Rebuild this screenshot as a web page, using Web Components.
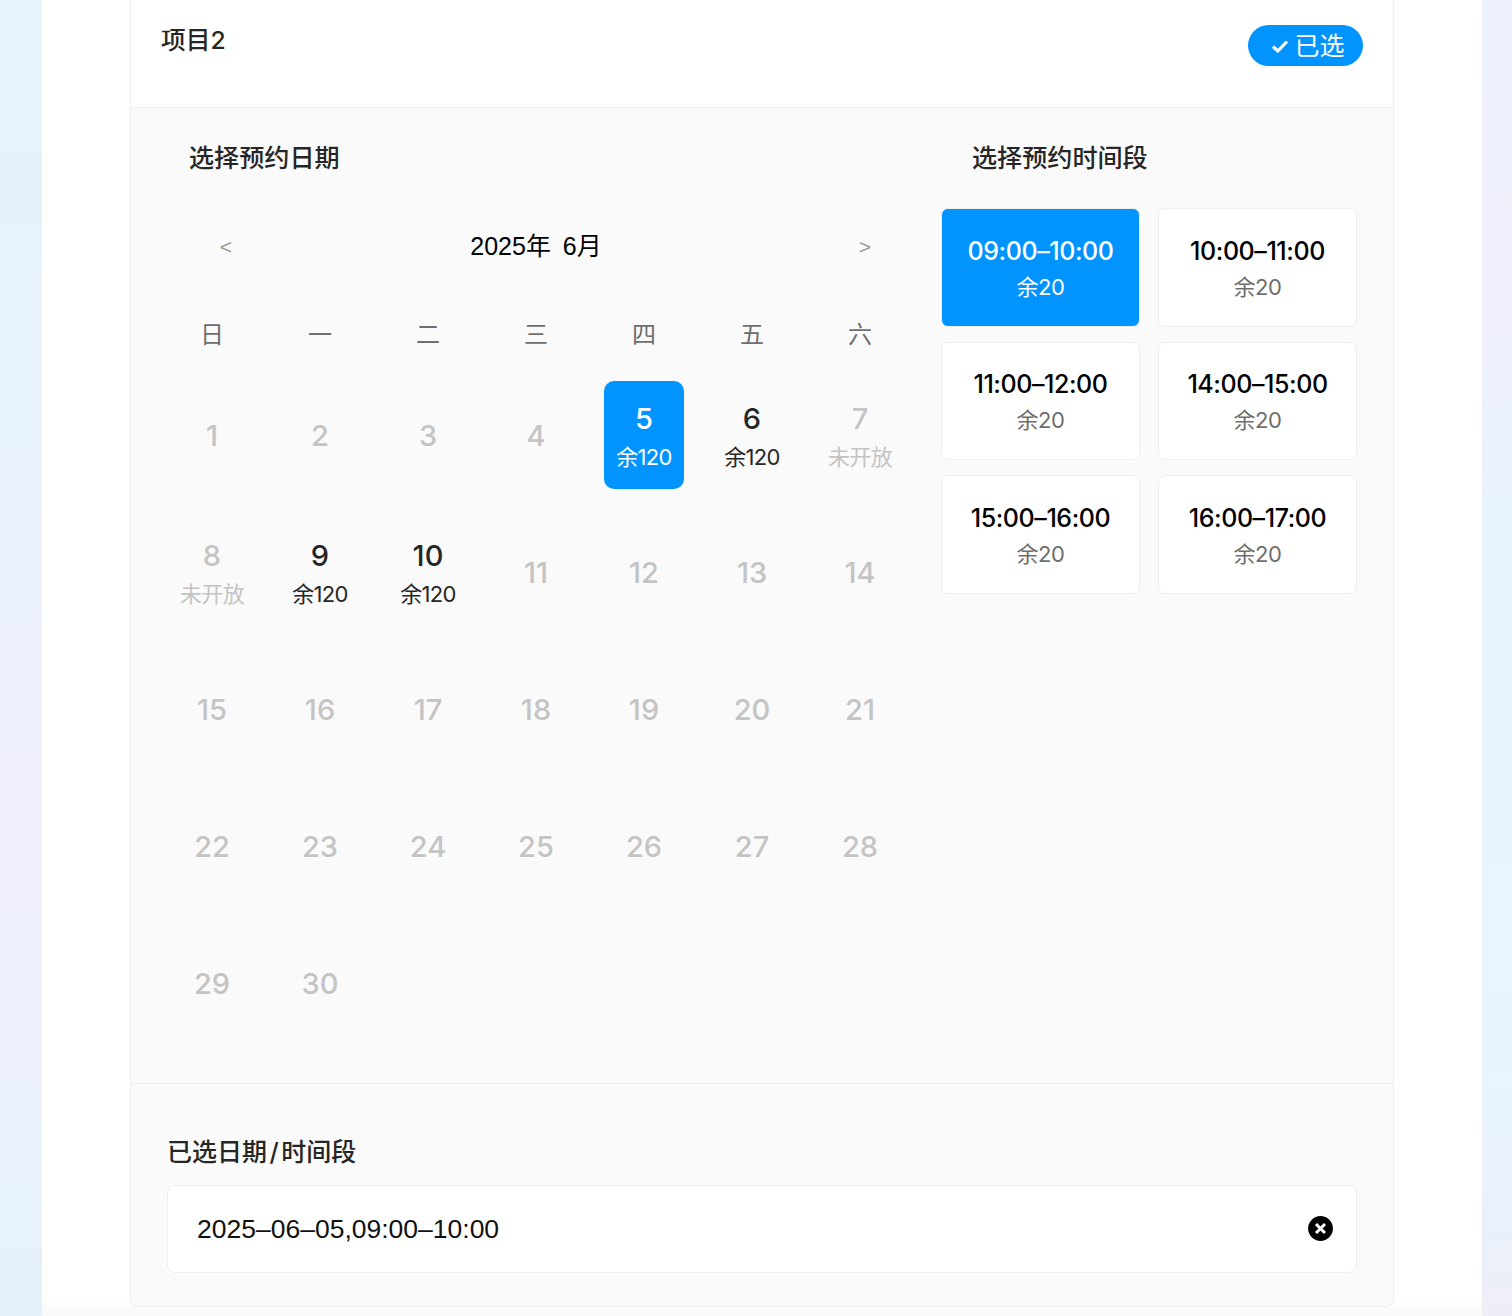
<!DOCTYPE html>
<html lang="zh">
<head>
<meta charset="utf-8">
<title>预约</title>
<style>
  html, body { margin: 0; height: 1316px; overflow: hidden; }
  body {
    font-family: Inter, "Noto Sans CJK SC", sans-serif;
    background:
      linear-gradient(180deg, #e6f3fd 0, #e5f2fc 200px, #e8f1fc 450px, #eaf0fc 600px, #efeffb 800px, #edf0fb 1000px, #e8f2fb 1200px, #e4f1fb 1316px) left top / 42px 100% no-repeat,
      linear-gradient(180deg, #eceffd 0, #efeffb 300px, #e9f3fc 500px, #e9f3fc 800px, #e8f4fd 1050px, #eaf0f9 1240px, #efeef6 1316px) right top / 30px 100% no-repeat,
      #fff;
  }
</style>
</head>
<body>
<booking-page>
  <project-card name="项目2">
    <booking-calendar slot="calendar"></booking-calendar>
    <slot-picker slot="slots"></slot-picker>
    <selected-field slot="footer" label="已选日期/时间段" value="2025–06–05,09:00–10:00"></selected-field>
  </project-card>
</booking-page>
<script>
  class BookingPage extends HTMLElement {
    constructor() {
      super();
      this.attachShadow({ mode: "open" });
      this.shadowRoot.innerHTML = `
        <style>
          :host { display: block; margin: 0 30px 0 42px; height: 1316px; padding: 0 88px;
            box-sizing: border-box; background: linear-gradient(180deg, #fff 0, #fff 1296px, #f8f8f9 1316px); }
        </style>
        <slot></slot>`;
    }
  }

  class ProjectCard extends HTMLElement {
    constructor() {
      super();
      this.attachShadow({ mode: "open" });
    }
    connectedCallback() {
      this.shadowRoot.innerHTML = `
        <style>
          :host { display: block; height: 1307px; box-sizing: border-box; border: 1px solid #efefef;
            border-top: 0; border-radius: 0 0 8px 8px; background: #fafafa; overflow: hidden; color: #262626; }
          .head { height: 108px; box-sizing: border-box; background: #fff; border-bottom: 1px solid #efefef;
            display: flex; justify-content: space-between; align-items: flex-start; padding: 25px 30px 0 30px; }
          .name { font-size: 24.7px; line-height: 30px; font-weight: 500; }
          .tag { width: 115px; height: 41px; box-sizing: border-box; border-radius: 21px; background: #0194ff;
            color: #fff; font-size: 25px; display: flex; align-items: center; justify-content: center; gap: 6px; padding-left: 4px; }
          .tag svg { width: 18px; height: 14px; margin-left: 1px; }
          .tag span { margin-top: -4px; margin-left: -1px; }
          .body { height: 976px; box-sizing: border-box; display: flex; border-bottom: 1px solid #efefef; }
          .foot { padding: 51px 36px 0; }
        </style>
        <div class="head">
          <div class="name">${this.getAttribute("name")}</div>
          <div class="tag">
            <svg viewBox="0 0 18 14"><path d="M2 7.5 6.8 12 16 2.5" fill="none" stroke="#fff" stroke-width="3.2"/></svg>
            <span>已选</span>
          </div>
        </div>
        <div class="body">
          <slot name="calendar"></slot>
          <slot name="slots"></slot>
        </div>
        <div class="foot"><slot name="footer"></slot></div>`;
    }
  }

  class BookingCalendar extends HTMLElement {
    constructor() {
      super();
      this.attachShadow({ mode: "open" });
    }
    connectedCallback() {
      const week = ["日", "一", "二", "三", "四", "五", "六"];
      const open = { 5: ["余120", "on"], 6: ["余120", "open"], 7: ["未开放", "closed"], 8: ["未开放", "closed"], 9: ["余120", "open"], 10: ["余120", "open"] };
      let days = "";
      for (let i = 1; i <= 30; i++) {
        const d = open[i];
        days += `<cal-day num="${i}" ${d ? `sub="${d[0]}" state="${d[1]}"` : ""}></cal-day>`;
      }
      this.shadowRoot.innerHTML = `
        <style>
          :host { display: block; width: 783px; box-sizing: border-box; padding: 0 0 0 27px; flex: none; }
          h3 { margin: 0; padding: 35px 0 0 31px; font-size: 25.1px; line-height: 30px; font-weight: 500; color: #262626; }
          .nav { width: 756px; display: grid; grid-template-columns: 1fr auto 1fr; align-items: center; margin-top: 50px; height: 44px;
            font-family: "Liberation Sans", "Noto Sans CJK SC", sans-serif; }
          .nav span { font-size: 21px; color: #999; width: 16px; text-align: center; position: relative; top: 2px; }
          .nav span:first-child { margin-left: 60px; }
          .nav span:last-child { justify-self: end; margin-right: 41px; }
          .nav b { font-weight: 400; font-size: 25px; color: #000; white-space: pre; word-spacing: -1px; position: relative; top: -1px; }
          .week, .days { width: 756px; display: grid; grid-template-columns: repeat(7, 108px); }
          .week { margin-top: 43px; height: 44px; align-items: center; justify-items: center; font-size: 24px; color: #6e6e6e; }
          .days { margin-top: 27px; grid-auto-rows: 108px; row-gap: 29px; }
        </style>
        <h3>选择预约日期</h3>
        <div class="nav"><span>&lt;</span><b>2025年  6月</b><span>&gt;</span></div>
        <div class="week">${week.map(w => `<span>${w}</span>`).join("")}</div>
        <div class="days">${days}</div>`;
    }
  }

  class CalDay extends HTMLElement {
    constructor() {
      super();
      this.attachShadow({ mode: "open" });
    }
    connectedCallback() {
      const sub = this.getAttribute("sub");
      this.shadowRoot.innerHTML = `
        <style>
          :host { display: flex; justify-content: center; color: #c4c4c4; }
          .box { width: 80px; height: 108px; box-sizing: border-box; padding-top: 1px; border-radius: 10px; display: flex; flex-direction: column; align-items: center; justify-content: center; }
          .num { font-size: 29px; line-height: 36px; font-weight: 450; }
          .sub { font-size: 22px; line-height: 30px; margin-top: 5px; white-space: nowrap; letter-spacing: -.7px; }
          :host([sub]) .box { padding-top: 3px; }
          :host([state="open"]) { color: #262626; }
          :host([state="on"]) .box { background: #0194ff; color: #fff; }
        </style>
        <div class="box">
          <div class="num">${this.getAttribute("num")}</div>
          ${sub ? `<div class="sub">${sub}</div>` : ""}
        </div>`;
    }
  }

  class SlotPicker extends HTMLElement {
    constructor() {
      super();
      this.attachShadow({ mode: "open" });
    }
    connectedCallback() {
      const times = ["09:00–10:00", "10:00–11:00", "11:00–12:00", "14:00–15:00", "15:00–16:00", "16:00–17:00"];
      this.shadowRoot.innerHTML = `
        <style>
          :host { display: block; flex: none; width: 480px; }
          h3 { margin: 0; padding: 35px 0 0 58px; font-size: 25.1px; line-height: 30px; font-weight: 500; color: #262626; }
          .grid { margin: 35px 0 0 27px; display: grid; grid-template-columns: 199px 199px; column-gap: 18px; row-gap: 15px; grid-auto-rows: 118.6px; }
        </style>
        <h3>选择预约时间段</h3>
        <div class="grid">
          ${times.map((t, i) => `<time-slot time="${t}" left="余20" ${i === 0 ? "active" : ""}></time-slot>`).join("")}
        </div>`;
    }
  }

  class TimeSlot extends HTMLElement {
    constructor() {
      super();
      this.attachShadow({ mode: "open" });
    }
    connectedCallback() {
      this.shadowRoot.innerHTML = `
        <style>
          :host { display: flex; flex-direction: column; align-items: center; justify-content: center; box-sizing: border-box; padding-top: 2px;
            background: #fff; border: 1px solid #eee; border-radius: 7px; color: #000; }
          .t { font-size: 25px; line-height: 32px; font-weight: 500; letter-spacing: -.42px; }
          .l { font-size: 22px; line-height: 30px; margin-top: 5px; color: #6e6e6e; letter-spacing: -.5px; }
          :host([active]) { background: #0194ff; color: #fff; }
          :host([active]) .l { color: #fff; }
        </style>
        <div class="t">${this.getAttribute("time")}</div>
        <div class="l">${this.getAttribute("left")}</div>`;
    }
  }

  class SelectedField extends HTMLElement {
    constructor() {
      super();
      this.attachShadow({ mode: "open" });
    }
    connectedCallback() {
      this.shadowRoot.innerHTML = `
        <style>
          :host { display: block; color: #262626; }
          .label { font-size: 25px; line-height: 34px; font-weight: 500; }
          .label i { font-style: normal; margin: 0 2.5px; }
          .field { margin-top: 16px; height: 88px; box-sizing: border-box; background: #fff; border: 1px solid #eee; border-radius: 8px;
            display: flex; align-items: center; justify-content: space-between; padding: 0 23px 0 29px; }
          .v { font-family: "Liberation Sans", sans-serif; font-size: 26.5px; color: #111; }
          svg { width: 25px; height: 25px; margin-top: -2px; }
        </style>
        <div class="label">${this.getAttribute("label").replace("/", "<i>/</i>")}</div>
        <div class="field">
          <span class="v">${this.getAttribute("value")}</span>
          <svg viewBox="0 0 25 25"><circle cx="12.5" cy="12.5" r="12.4" fill="#000"/><path d="M8 8 17 17M17 8 8 17" stroke="#fff" stroke-width="3"/></svg>
        </div>`;
    }
  }

  customElements.define("booking-page", BookingPage);
  customElements.define("project-card", ProjectCard);
  customElements.define("booking-calendar", BookingCalendar);
  customElements.define("cal-day", CalDay);
  customElements.define("slot-picker", SlotPicker);
  customElements.define("time-slot", TimeSlot);
  customElements.define("selected-field", SelectedField);
</script>
</body>
</html>
